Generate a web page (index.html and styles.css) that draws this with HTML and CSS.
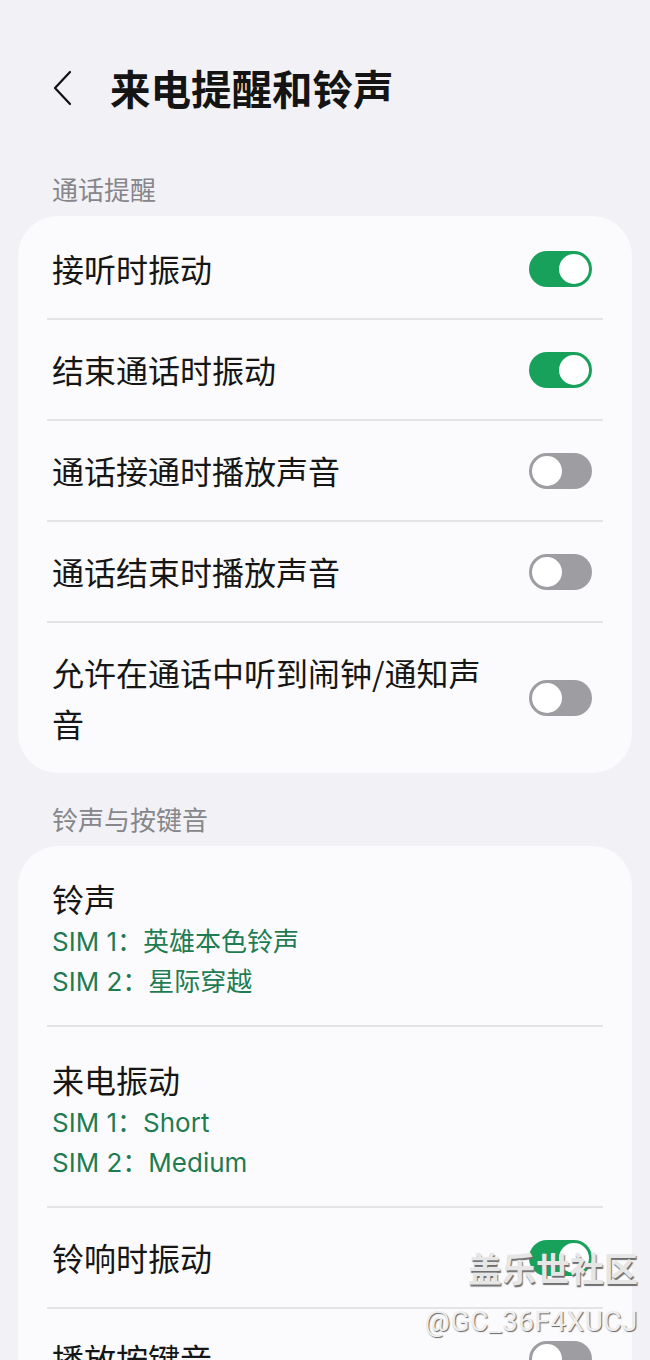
FILE: index.html
```html
<!DOCTYPE html>
<html lang="zh-CN">
<head>
    <meta charset="utf-8">
    <title>来电提醒和铃声</title>
    <link rel="stylesheet" href="styles.css">
</head>
<body>
<div class="header">
    <span class="back">
        <svg width="22" height="36" viewBox="0 0 22 36"><path d="M18 2 L3 18 L18 34" fill="none" stroke="#111" stroke-width="2.2" stroke-linecap="round" stroke-linejoin="round"/></svg>
    </span>
    <h1>来电提醒和铃声</h1>
</div>

<div class="section-label">通话提醒</div>
<div class="card">
    <div class="row">
        <div class="row-text">接听时振动</div>
        <span class="switch on"></span>
    </div>
    <div class="divider"></div>
    <div class="row">
        <div class="row-text">结束通话时振动</div>
        <span class="switch on"></span>
    </div>
    <div class="divider"></div>
    <div class="row">
        <div class="row-text">通话接通时播放声音</div>
        <span class="switch"></span>
    </div>
    <div class="divider"></div>
    <div class="row">
        <div class="row-text">通话结束时播放声音</div>
        <span class="switch"></span>
    </div>
    <div class="divider"></div>
    <div class="row">
        <div class="row-text">允许在通话中听到闹钟/通知声音</div>
        <span class="switch"></span>
    </div>
</div>

<div class="section-label">铃声与按键音</div>
<div class="card">
    <div class="row detail">
        <div class="row-text">
            <div class="title">铃声</div>
            <div class="sub">SIM 1：英雄本色铃声</div>
            <div class="sub">SIM 2：星际穿越</div>
        </div>
    </div>
    <div class="divider"></div>
    <div class="row detail">
        <div class="row-text">
            <div class="title">来电振动</div>
            <div class="sub">SIM 1：Short</div>
            <div class="sub">SIM 2：Medium</div>
        </div>
    </div>
    <div class="divider"></div>
    <div class="row">
        <div class="row-text">铃响时振动</div>
        <span class="switch on"></span>
    </div>
    <div class="divider"></div>
    <div class="row">
        <div class="row-text">播放按键音</div>
        <span class="switch"></span>
    </div>
</div>

<div class="watermark">
    <div class="wm-name">盖乐世社区</div>
    <div class="wm-user">@GC_36F4XUCJ</div>
</div>
</body>
</html>
```

FILE: styles.css
```css
body {
    margin: 0;
    padding: 0;
    background-color: #f2f2f6;
    font-family: Inter, "Noto Sans CJK SC", sans-serif;
    color: #161616;
    position: relative;
}

.header {
    display: flex;
    align-items: center;
    height: 56px;
    padding: 60px 0 0 52px;
}

.back {
    display: flex;
    width: 58px;
}

h1 {
    margin: 0;
    font-family: "Noto Sans CJK SC", sans-serif;
    font-size: 40.5px;
    font-weight: bold;
    line-height: 56px;
    color: #141414;
}

.section-label {
    margin: 58px 0 12px 52px;
    font-family: "Noto Sans CJK SC", sans-serif;
    font-size: 26px;
    line-height: 30px;
    color: #86868b;
}

.card + .section-label {
    margin-top: 31px;
}

.card {
    margin: 0 18px;
    background-color: #fbfbfd;
    border-radius: 40px;
    overflow: hidden;
}

.row {
    display: flex;
    align-items: center;
    justify-content: space-between;
    gap: 24px;
    min-height: 51px;
    padding: 24px 40px 24px 34px;
}

.card .row:first-child {
    padding-top: 27px;
}

.row-text {
    flex: 1;
    font-family: "Noto Sans CJK SC", sans-serif;
    font-size: 32px;
    line-height: 51px;
}

.card .row.detail {
    padding-top: 28px;
    padding-bottom: 23px;
}

.row.detail .title {
    line-height: 48px;
}

.sub {
    font-family: Inter, "Noto Sans CJK SC", sans-serif;
    font-size: 26px;
    line-height: 40px;
    color: #1f7c52;
}

.divider {
    height: 2px;
    margin: 0 29px;
    background-color: #e4e4e8;
}

.switch {
    position: relative;
    flex: none;
    width: 63px;
    height: 36px;
    border-radius: 18px;
    background-color: #9d9da2;
}

.switch::after {
    content: "";
    position: absolute;
    top: 3px;
    left: 3px;
    width: 30px;
    height: 30px;
    border-radius: 50%;
    background-color: #fff;
}

.switch.on {
    background-color: #17a15b;
}

.switch.on::after {
    left: 30px;
}

.watermark {
    position: absolute;
    top: 1240px;
    right: 12px;
    text-align: right;
    font-family: "Noto Sans CJK SC", sans-serif;
    color: #e6e6e6;
}

.wm-name {
    font-size: 34px;
    font-weight: bold;
    line-height: 56px;
    text-shadow: 1px 2px 1px #6e6e6e;
}

.wm-user {
    margin-top: 8px;
    font-family: Roboto, sans-serif;
    font-size: 28px;
    line-height: 36px;
    color: #eeeeee;
    text-shadow: 1px 1px 1px #666;
    letter-spacing: 0.5px;
}
```
